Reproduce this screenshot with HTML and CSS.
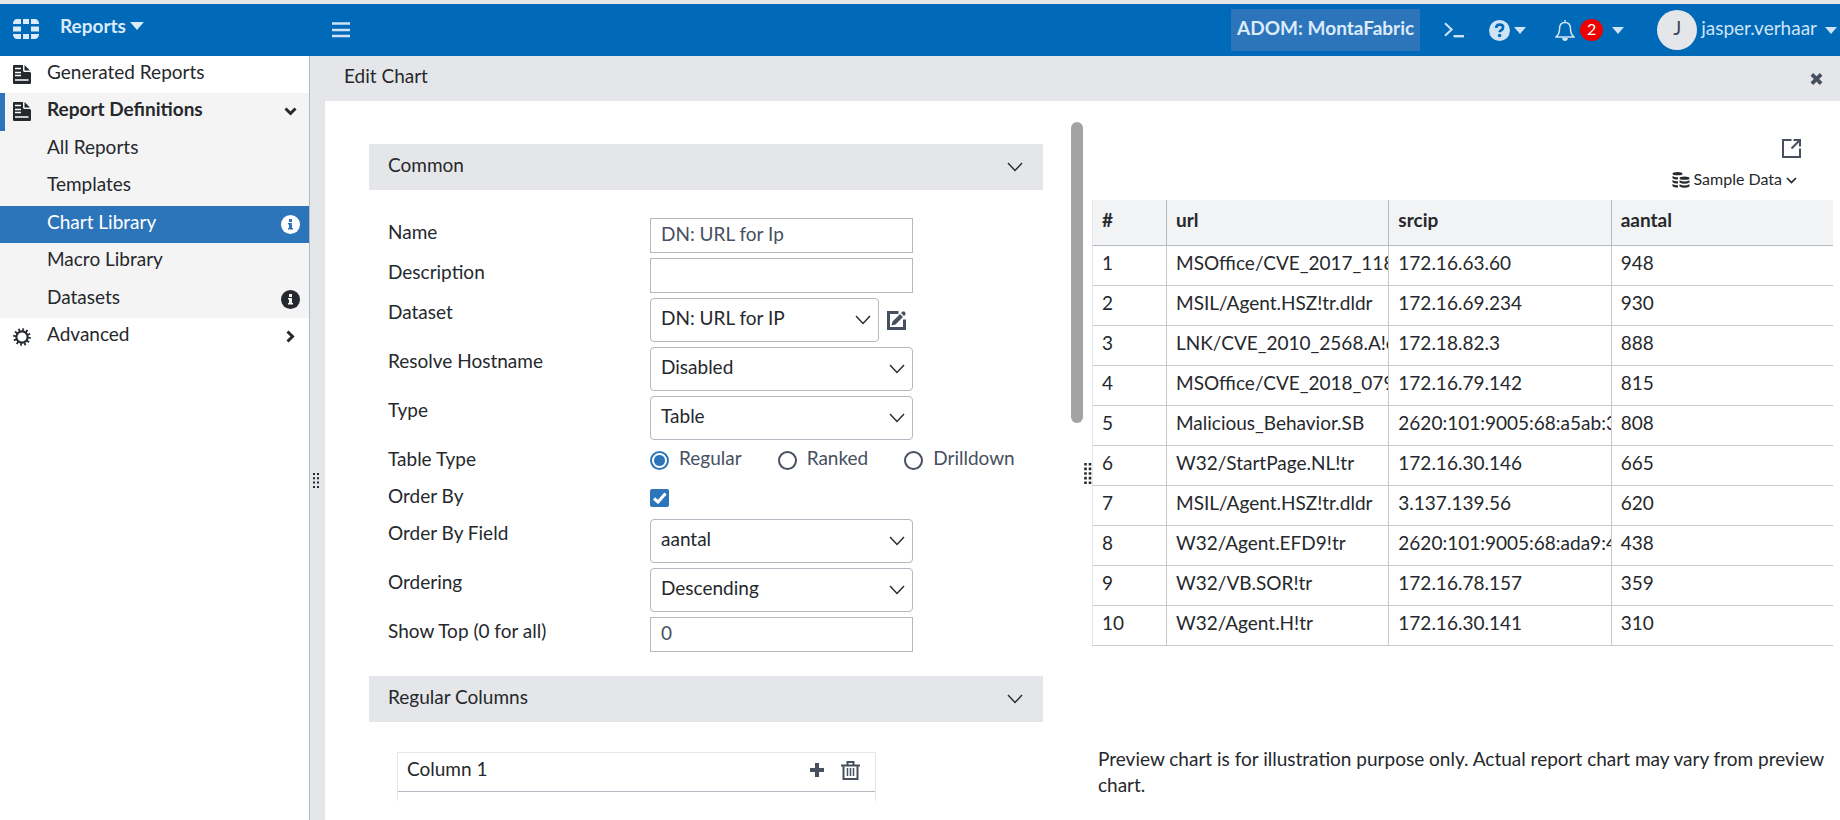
FILE: index.html
```html
<!DOCTYPE html>
<html lang="en">
<head>
<meta charset="utf-8">
<title>Reports - Edit Chart</title>
<link rel="stylesheet" href="styles.css">
</head>
<body>
<svg class="defs" aria-hidden="true">
  <symbol id="caret" viewBox="0 0 12 7"><path d="M0 0h12L6 7z" fill="currentColor"/></symbol>
  <symbol id="chevron" viewBox="0 0 16 10"><path d="M1 1l7 7.500 7-7.500" fill="none" stroke="currentColor" stroke-width="1.400"/></symbol>
  <symbol id="info" viewBox="0 0 19 19"><circle cx="9.500" cy="9.500" r="9.500" fill="currentColor"/><path d="M8 4h3v3H8zM7 8h4v5h1v1.500H7V13h1V9.500H7z" class="info-mark"/></symbol>
  <symbol id="report" viewBox="0 0 18 20"><path d="M1 0h9v6l1 1h6l1 1v10q0 1-1 1H1q-1 0-1-1V1q0-1 1-1z" fill="currentColor"/><path d="M11.500 0l5.500 5.500h-5.500z" fill="currentColor"/><path d="M2 3.500h6M2 7.500h6M2 10.500h6M2 15h13.500" stroke="#fff" stroke-width="1.300"/></symbol>
  <symbol id="grip" viewBox="0 0 8 21"><path d="M1.500 0v21M6 0v21" fill="none" stroke="currentColor" stroke-width="2.600" stroke-dasharray="2.600 2"/></symbol>
</svg>

<header class="topbar">
  <div class="brand">
    <svg class="logo" viewBox="0 0 26 20" aria-hidden="true"><path d="M10 0h6v5h-6zM10 15h6v5h-6zM0 7.500h8v5H0zM18 7.500h8v5h-8zM4 0h4v5H0V4q1-4 4-4zM18 0h4q3 0 4 4v1h-8zM0 15h8v5H4q-3 0-4-4zM18 15h8v1q-1 4-4 4h-4z" fill="#dcebfa"/></svg>
    <button class="app-menu" type="button">Reports <svg class="caret-lg"><use href="#caret"/></svg></button>
  </div>
  <button class="burger" type="button" aria-label="Toggle navigation"><svg viewBox="0 0 18 16"><path d="M0 1.500h18M0 8h18M0 14h18" stroke="currentColor" stroke-width="2.500"/></svg></button>
  <div class="tools">
    <button class="adom" type="button">ADOM: MontaFabric</button>
    <button class="cli" type="button" aria-label="CLI console"><svg viewBox="0 0 22 16"><path d="M1 1l7 6.500L1 14" fill="none" stroke="currentColor" stroke-width="2.200"/><path d="M10 14.500h11" stroke="currentColor" stroke-width="2.500"/></svg></button>
    <button class="help" type="button" aria-label="Help"><svg class="help-icon" viewBox="0 0 20 20"><circle cx="10" cy="10" r="10" fill="currentColor"/><path d="M6.800 7.500q.3-3.200 3.400-3.200 3.200 0 3.200 2.700 0 1.800-1.800 2.700-1.500.8-1.500 2" fill="none" stroke="#0069b8" stroke-width="2.600"/><circle cx="10.100" cy="14.800" r="1.600" fill="#0069b8"/></svg><svg class="caret"><use href="#caret"/></svg></button>
    <button class="alerts" type="button" aria-label="Notifications"><svg class="bell" viewBox="0 0 20 21"><path d="M10 2.500c-4.500 0-5.500 3.500-5.500 6.500 0 4-1 6-3.500 8h18c-2.500-2-3.500-4-3.500-8 0-3-1-6.500-5.500-6.500zM10 0v2.500" fill="none" stroke="currentColor" stroke-width="1.500"/><path d="M7 18h6q-.5 3-3 3t-3-3z" fill="currentColor"/></svg><span class="badge">2</span><svg class="caret"><use href="#caret"/></svg></button>
    <button class="user" type="button"><span class="avatar">J</span><span>jasper.verhaar</span><svg class="caret"><use href="#caret"/></svg></button>
  </div>
</header>

<div class="shell">
  <nav class="sidebar">
    <a class="item" href="#"><svg class="lead"><use href="#report"/></svg><span>Generated Reports</span></a>
    <div class="group">
      <a class="item open" href="#"><svg class="lead"><use href="#report"/></svg><span>Report Definitions</span><svg class="trail arrow" viewBox="0 0 13 9"><path d="M1.500 1.500l5 5 5-5" fill="none" stroke="currentColor" stroke-width="3"/></svg></a>
      <a class="item" href="#"><span>All Reports</span></a>
      <a class="item" href="#"><span>Templates</span></a>
      <a class="item current" href="#"><span>Chart Library</span><svg class="trail info"><use href="#info"/></svg></a>
      <a class="item" href="#"><span>Macro Library</span></a>
      <a class="item" href="#"><span>Datasets</span><svg class="trail info"><use href="#info"/></svg></a>
    </div>
    <a class="item" href="#"><svg class="lead" viewBox="0 0 20 20"><circle cx="10" cy="10" r="8.300" fill="none" stroke="currentColor" stroke-width="3" stroke-dasharray="1.900 2.446"/><circle cx="10" cy="10" r="6.300" fill="none" stroke="currentColor" stroke-width="2.400"/></svg><span>Advanced</span><svg class="trail arrow-right" viewBox="0 0 9 13"><path d="M1.500 1.500l5 5-5 5" fill="none" stroke="currentColor" stroke-width="3"/></svg></a>
  </nav>
  <div class="gutter"><svg class="gutter-grip" viewBox="0 0 6 16"><path d="M1 0v16M5 0v16" fill="none" stroke="currentColor" stroke-width="2" stroke-dasharray="2 2.300"/></svg></div>

  <main class="main">
    <div class="titlebar">
      <h1>Edit Chart</h1>
      <button class="close" type="button" aria-label="Close"><svg viewBox="0 0 14 14"><path d="M2 2l10 10M12 2L2 12" stroke="currentColor" stroke-width="4"/></svg></button>
    </div>
    <div class="workspace">
      <form class="editor">
        <button class="section" type="button"><span>Common</span><svg class="chevron"><use href="#chevron"/></svg></button>
        <div class="fields">
          <label for="name">Name</label>
          <input class="text" id="name" type="text" value="DN: URL for Ip">
          <label for="desc">Description</label>
          <input class="text" id="desc" type="text">
          <label for="dataset">Dataset</label>
          <div class="with-edit">
            <div class="pick"><select id="dataset"><option>DN: URL for IP</option></select><svg class="chevron"><use href="#chevron"/></svg></div>
            <button class="edit" type="button" aria-label="Edit dataset"><svg viewBox="0 0 19 19"><path d="M11.500 1.500H1.500v16h16v-9" fill="none" stroke="currentColor" stroke-width="3"/><path d="M4.500 14.500l1-4L13 3l3 3-7.500 7.500zM14 2l1.500-1.500h2L18.500 2v1.500L17 5z" fill="currentColor"/></svg></button>
          </div>
          <label for="resolve">Resolve Hostname</label>
          <div class="pick"><select id="resolve"><option>Disabled</option></select><svg class="chevron"><use href="#chevron"/></svg></div>
          <label for="type">Type</label>
          <div class="pick"><select id="type"><option>Table</option></select><svg class="chevron"><use href="#chevron"/></svg></div>
          <span class="label">Table Type</span>
          <div class="choices">
            <label><input type="radio" name="tt" checked><span>Regular</span></label>
            <label><input type="radio" name="tt"><span>Ranked</span></label>
            <label><input type="radio" name="tt"><span>Drilldown</span></label>
          </div>
          <label for="orderby">Order By</label>
          <div class="tick"><input id="orderby" type="checkbox" checked><svg viewBox="0 0 14 12"><path d="M1 6.500l4 3.500L12.500 1.500" fill="none" stroke="#fff" stroke-width="3"/></svg></div>
          <label for="field">Order By Field</label>
          <div class="pick"><select id="field"><option>aantal</option></select><svg class="chevron"><use href="#chevron"/></svg></div>
          <label for="ordering">Ordering</label>
          <div class="pick"><select id="ordering"><option>Descending</option></select><svg class="chevron"><use href="#chevron"/></svg></div>
          <label for="top">Show Top (0 for all)</label>
          <input class="text" id="top" type="text" value="0">
        </div>
        <button class="section" type="button"><span>Regular Columns</span><svg class="chevron"><use href="#chevron"/></svg></button>
        <div class="column-card">
          <div class="column-head">
            <span>Column 1</span>
            <button type="button" aria-label="Add column"><svg class="plus" viewBox="0 0 16 16"><path d="M8 1v14M1 8h14" stroke="currentColor" stroke-width="4"/></svg></button>
            <button type="button" aria-label="Delete column"><svg class="trash" viewBox="0 0 19 19"><path d="M6.500 4V1h6v3M0 4.500h19M2.500 5v13h14V5" fill="none" stroke="currentColor" stroke-width="2"/><path d="M6.500 7v8M9.500 7v8M12.500 7v8" stroke="currentColor" stroke-width="1.500"/></svg></button>
          </div>
        </div>
      </form>
      <div class="divider"><div class="thumb"></div><svg class="grip"><use href="#grip"/></svg></div>
      <section class="preview">
        <div class="preview-tools">
          <button type="button" aria-label="Open in new window"><svg class="external" viewBox="0 0 19 19"><path d="M9.500 1H1v17h17V9.500" fill="none" stroke="currentColor" stroke-width="2"/><path d="M11.500 1H18v6.500M17.500 1.500l-8 8" fill="none" stroke="currentColor" stroke-width="2"/></svg></button>
          <button class="sample" type="button"><svg class="db" viewBox="0 0 17 16"><ellipse cx="5" cy="1.700" rx="5" ry="1.600"/><path d="M0 4q2.500 1.500 5.500 1.200v2.300Q2 7.800 0 6.200zM0 8q2.500 1.500 5.500 1.200v2.300q-3.500.300-5.500-1.300zM0 12q2.500 1.500 5.500 1.200v2.300Q2 15.800 0 14.200z"/><ellipse cx="12" cy="6.200" rx="5" ry="1.600"/><path d="M7 8.200q5 2.500 10 0v2.300q-5 2.500-10 0zM7 12.200q5 2.500 10 0v2.300q-5 2.500-10 0z"/></svg><span>Sample Data</span><svg class="chevron-sm" viewBox="0 0 11 7"><path d="M1 1l4.500 4.500L10 1" fill="none" stroke="currentColor" stroke-width="1.700"/></svg></button>
        </div>
        <table>
          <colgroup><col class="c-num"><col><col><col></colgroup>
          <thead><tr><th>#</th><th>url</th><th>srcip</th><th>aantal</th></tr></thead>
          <tbody>
            <tr><td>1</td><td>MSOffice/CVE_2017_118</td><td>172.16.63.60</td><td>948</td></tr>
            <tr><td>2</td><td>MSIL/Agent.HSZ!tr.dldr</td><td>172.16.69.234</td><td>930</td></tr>
            <tr><td>3</td><td>LNK/CVE_2010_2568.A!e</td><td>172.18.82.3</td><td>888</td></tr>
            <tr><td>4</td><td>MSOffice/CVE_2018_079</td><td>172.16.79.142</td><td>815</td></tr>
            <tr><td>5</td><td>Malicious_Behavior.SB</td><td>2620:101:9005:68:a5ab:3</td><td>808</td></tr>
            <tr><td>6</td><td>W32/StartPage.NL!tr</td><td>172.16.30.146</td><td>665</td></tr>
            <tr><td>7</td><td>MSIL/Agent.HSZ!tr.dldr</td><td>3.137.139.56</td><td>620</td></tr>
            <tr><td>8</td><td>W32/Agent.EFD9!tr</td><td>2620:101:9005:68:ada9:4</td><td>438</td></tr>
            <tr><td>9</td><td>W32/VB.SOR!tr</td><td>172.16.78.157</td><td>359</td></tr>
            <tr><td>10</td><td>W32/Agent.H!tr</td><td>172.16.30.141</td><td>310</td></tr>
          </tbody>
        </table>
        <p class="note">Preview chart is for illustration purpose only. Actual report chart may vary from preview chart.</p>
      </section>
    </div>
  </main>
</div>
</body>
</html>
```
FILE: styles.css
```css
* { box-sizing: border-box; }
body {
  margin: 0;
  min-height: 100vh;
  display: flex;
  flex-direction: column;
  font: 19px/28px Lato, "Open Sans", sans-serif;
  color: #25282c;
  background: #fff;
}
.defs { display: none; }
svg { display: block; flex: none; }
a { color: inherit; text-decoration: none; }
button {
  font: inherit;
  color: inherit;
  border: 0;
  padding: 0;
  background: none;
  display: flex;
  align-items: center;
}

/* top bar */
.topbar {
  flex: none;
  height: 56px;
  border-top: 4px solid #e4e6e8;
  background: #0069b8;
  color: #cfe3f7;
  display: flex;
  align-items: center;
}
.brand { width: 332px; flex: none; padding-left: 13px; display: flex; align-items: center; gap: 21px; }
.logo { width: 26px; height: 20px; margin-bottom: 2px; }
.app-menu { font-weight: 700; color: #dcebfa; gap: 4px; padding-bottom: 8px; }
.caret-lg { width: 14px; height: 8px; }
.caret { width: 12px; height: 7px; }
.burger svg { width: 18px; height: 16px; }
.tools { margin-left: auto; display: flex; align-items: center; padding-right: 3px; }
.adom { height: 42px; padding: 0 6px 5px; background: #2d75ba; color: #dcebfa; font-weight: 700; margin-right: 24px; }
.cli { margin-right: 24px; }
.cli svg { width: 21px; height: 16px; }
.help { gap: 4px; margin-right: 29px; }
.help-icon { width: 21px; height: 21px; }
.alerts { margin-right: 33px; }
.bell { width: 20px; height: 21px; margin-right: 5px; }
.badge {
  width: 23px; height: 22px;
  border-radius: 50%;
  background: #ee0000; color: #fff;
  font-size: 16px; line-height: 20px; text-align: center;
  margin-right: 9px;
}
.user > span + span { padding-bottom: 5px; }
.avatar {
  width: 40px; height: 40px;
  border-radius: 50%;
  background: #e5e6ea; color: #3c4656;
  line-height: 35px; text-align: center;
  margin-right: 4px;
}
.user .caret { margin-left: 8px; }

/* navigation */
.shell { flex: 1; display: flex; }
.sidebar { width: 310px; flex: none; border-right: 1px solid #b4b8c0; }
.group { display: grid; grid-auto-rows: 1fr; height: 225px; background: #f4f4f4; }
.item { display: flex; align-items: center; min-height: 37px; padding: 0 9px 0 47px; --mark: #f4f4f4; }
.item span { padding-bottom: 5px; }
.lead { width: 18px; height: 20px; margin: 0 16px 0 -34px; }
.trail { margin-left: auto; }
.arrow { width: 13px; height: 9px; margin-right: 3px; }
.arrow-right { width: 9px; height: 13px; margin-right: 5px; }
.info { width: 19px; height: 19px; }
.info-mark { fill: var(--mark); }
.open { font-weight: 700; border-left: 5px solid #2d75ba; padding-left: 42px; }
.current { background: #2d75ba; color: #fff; --mark: #2d75ba; }
.gutter { width: 15px; flex: none; background: #e5e6ea; padding: 417px 0 0 3px; }
.gutter-grip { width: 6px; height: 16px; }

/* page */
.main { flex: 1; min-width: 0; display: flex; flex-direction: column; }
.titlebar {
  height: 45px;
  background: #e5e6ea;
  padding: 0 17px 0 19px;
  display: flex; align-items: center; justify-content: space-between;
}
h1 { margin: 0; padding-bottom: 5px; font-size: 19px; line-height: 28px; font-weight: 400; }
.close { color: #46505f; }
.close svg { width: 13px; height: 14px; }
.workspace { flex: 1; display: flex; padding: 21px 7px 19px 44px; }

/* chart form */
.editor { flex: 674; min-width: 0; padding-top: 22px; }
.section {
  width: 100%;
  height: 46px;
  background: #e5e6ea;
  padding: 0 20px 0 19px;
  justify-content: space-between;
}
.section span { padding-bottom: 4px; }
.chevron { width: 16px; height: 10px; }
.fields {
  display: grid;
  grid-template-columns: 262px 263px;
  row-gap: 5px;
  padding: 28px 0 24px 19px;
}
.text {
  height: 35px;
  border: 1px solid #b4b8c0;
  padding: 0 10px 4px;
  font: inherit;
  color: #46505f;
  background: #fff;
}
.pick { display: grid; flex: 1; height: 44px; align-items: center; }
.pick > * { grid-area: 1 / 1; }
.pick select {
  appearance: none;
  width: 100%; height: 44px;
  border: 1px solid #b4b8c0; border-radius: 4px;
  padding: 0 30px 5px 10px;
  font: inherit; color: inherit; background: #fff;
}
.pick .chevron { justify-self: end; margin-right: 8px; pointer-events: none; }
.with-edit { display: flex; align-items: center; gap: 8px; padding-right: 7px; }
.edit, .column-head button, .preview-tools { color: #46505f; }
.edit svg { width: 19px; height: 19px; }
.choices { display: flex; gap: 36px; height: 32px; padding-bottom: 2px; }
.choices label { display: flex; align-items: center; gap: 10px; color: #46505f; }
.choices span { padding-bottom: 4px; }
.choices input {
  appearance: none;
  width: 19px; height: 19px;
  margin: 0;
  border: 2px solid #46505f; border-radius: 50%;
}
.choices input:checked { border-color: #2d75ba; background: radial-gradient(#2d75ba 5px, #fff 6px); }
.tick { display: grid; width: 19px; height: 32px; place-items: center; }
.tick > * { grid-area: 1 / 1; }
.tick input { appearance: none; width: 19px; height: 18px; margin: 0; border-radius: 2px; background: #2d75ba; }
.tick svg { width: 14px; height: 12px; pointer-events: none; }
.column-card {
  margin: 30px 167px 0 28px;
  height: 49px;
  overflow: hidden;
  border: 1px solid #e5e6ea;
  border-bottom: 0;
}
.column-head {
  height: 39px;
  padding: 0 15px 4px 9px;
  border-bottom: 1px solid #b4b8c0;
  display: flex; align-items: center; gap: 16px;
}
.column-head span { flex: 1; padding-bottom: 2px; }
.plus { width: 16px; height: 16px; }
.trash { width: 19px; height: 19px; }

.divider { flex: none; width: 49px; padding-left: 28px; }
.thumb { width: 12px; height: 301px; border-radius: 6px; background: #a3a3a3; }
.grip { width: 8px; height: 21px; margin: 40px 0 0 13px; }

/* preview */
.preview { flex: 741; min-width: 0; }
.preview-tools { height: 78px; display: flex; flex-direction: column; align-items: flex-end; padding: 17px 32px 0 0; gap: 7px; }
.external { width: 19px; height: 19px; }
.sample { font-size: 16px; color: #25282c; gap: 4px; margin-right: 4px; }
.sample span { padding-bottom: 2px; }
.db { width: 18px; height: 16px; fill: currentColor; }
.chevron-sm { width: 11px; height: 7px; }
table { width: 100%; table-layout: fixed; border-spacing: 0; }
.c-num { width: 74px; }
th, td {
  height: 40px;
  padding: 0 0 5px 9px;
  text-align: left;
  white-space: nowrap;
  overflow: hidden;
  border: solid #c8cacd;
  border-width: 0 0 1px 1px;
}
th { height: 46px; background: #f2f3f5; border-color: #b4b8c0; }
th:first-child, td:first-child { border-left-color: #e5e6ea; }
.note { margin: 100px 0 0; padding-left: 6px; line-height: 26px; }
```
